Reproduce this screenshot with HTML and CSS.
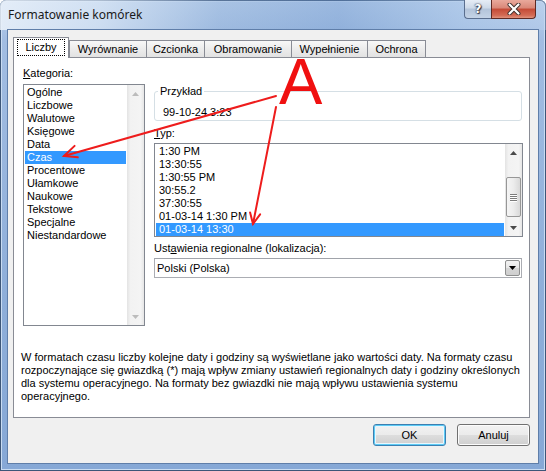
FILE: index.html
```html
<!DOCTYPE html>
<html lang="pl">
<head>
<meta charset="utf-8">
<title>Formatowanie komórek</title>
<link rel="stylesheet" href="styles.css">
</head>
<body>
<div class="window">
  <div class="titlebar">
    <span class="title">Formatowanie komórek</span>
    <div class="caption">
      <div class="cbtn help"><span>?</span></div>
      <div class="cbtn close">
        <svg width="14" height="12" viewBox="0 0 14 12"><path d="M2.5 1.5 L11.5 10.5 M11.5 1.5 L2.5 10.5" stroke="#40302c" stroke-width="4" stroke-linecap="round"/><path d="M2.5 1.5 L11.5 10.5 M11.5 1.5 L2.5 10.5" stroke="#ffffff" stroke-width="2.2" stroke-linecap="round"/></svg>
      </div>
    </div>
  </div>
  <div class="client">
    <div class="tabs">
      <div class="tab sel t1"><span class="focus">Liczby</span></div>
      <div class="tab t2">Wyrównanie</div>
      <div class="tab t3">Czcionka</div>
      <div class="tab t4">Obramowanie</div>
      <div class="tab t5">Wypełnienie</div>
      <div class="tab t6">Ochrona</div>
    </div>
    <div class="panel">
      <div class="main">
        <div class="leftcol">
          <div class="label"><u>K</u>ategoria:</div>
          <div class="listbox cat">
            <div class="items">
              <div class="item">Ogólne</div>
              <div class="item">Liczbowe</div>
              <div class="item">Walutowe</div>
              <div class="item">Księgowe</div>
              <div class="item">Data</div>
              <div class="item on">Czas</div>
              <div class="item">Procentowe</div>
              <div class="item">Ułamkowe</div>
              <div class="item">Naukowe</div>
              <div class="item">Tekstowe</div>
              <div class="item">Specjalne</div>
              <div class="item">Niestandardowe</div>
            </div>
            <div class="sb">
              <div class="arrow"><svg width="7" height="4" viewBox="0 0 7 4"><polygon points="0,4 7,4 3.5,0" fill="#bcbcbc"/></svg></div>
              <div class="track"></div>
              <div class="arrow"><svg width="7" height="4" viewBox="0 0 7 4"><polygon points="0,0 7,0 3.5,4" fill="#bcbcbc"/></svg></div>
            </div>
          </div>
        </div>
        <div class="rightcol">
          <fieldset class="group">
            <legend>Przykład</legend>
            <div class="sample">99-10-24 3:23</div>
          </fieldset>
          <div class="label lbl-typ"><u>T</u>yp:</div>
          <div class="listbox type">
            <div class="items">
              <div class="item">1:30 PM</div>
              <div class="item">13:30:55</div>
              <div class="item">1:30:55 PM</div>
              <div class="item">30:55.2</div>
              <div class="item">37:30:55</div>
              <div class="item">01-03-14 1:30 PM</div>
              <div class="item on">01-03-14 13:30</div>
            </div>
            <div class="sb">
              <div class="arrow"><svg width="7" height="4" viewBox="0 0 7 4"><polygon points="0,4 7,4 3.5,0" fill="#4a4a4a"/></svg></div>
              <div class="track">
                <div class="thumb"><span class="grip"></span><span class="grip"></span><span class="grip"></span><span class="grip"></span></div>
              </div>
              <div class="arrow"><svg width="7" height="4" viewBox="0 0 7 4"><polygon points="0,0 7,0 3.5,4" fill="#4a4a4a"/></svg></div>
            </div>
          </div>
          <div class="label lbl-ust">Ust<u>a</u>wienia regionalne (lokalizacja):</div>
          <div class="combo">
            <span class="combo-text">Polski (Polska)</span>
            <div class="dropbtn"><svg width="7" height="4" viewBox="0 0 7 4"><polygon points="0,0 7,0 3.5,4" fill="#000"/></svg></div>
          </div>
        </div>
      </div>
      <p class="desc">W formatach czasu liczby kolejne daty i godziny są wyświetlane jako wartości daty. Na formaty czasu<br>rozpoczynające się gwiazdką (*) mają wpływ zmiany ustawień regionalnych daty i godziny określonych<br>dla systemu operacyjnego. Na formaty bez gwiazdki nie mają wpływu ustawienia systemu<br>operacyjnego.</p>
    </div>
    <div class="buttons">
      <div class="btn default">OK</div>
      <div class="btn">Anuluj</div>
    </div>
  </div>
  <div class="bigA">A</div>
  <svg class="annot" width="546" height="471" viewBox="0 0 546 471">
    <g stroke="#ee1c1c" stroke-width="2" fill="none" stroke-linecap="round">
      <path d="M276 96 L64 156"/>
      <path d="M77.8 157.3 L64 156 L74.6 145.9"/>
      <path d="M276 107 L253 224"/>
      <path d="M260.1 214.3 L253 224 L250.1 212.4"/>
    </g>
  </svg>
</div>
</body>
</html>
```
FILE: styles.css
```css
html, body {
  margin: 0;
  padding: 0;
}
body {
  width: 546px;
  height: 471px;
  overflow: hidden;
  font-family: "Liberation Sans", Arial, sans-serif;
  font-size: 11px;
  color: #000;
}
.window {
  position: relative;
  width: 546px;
  height: 471px;
  box-sizing: border-box;
  display: flex;
  flex-direction: column;
  border-radius: 6px 6px 0 0;
  background: linear-gradient(180deg, #b9d0ec 0px, #a2bde2 40px, #8eaed9 300px, #86a8d6 471px);
  box-shadow: inset 0 0 0 1px #3d5678, inset 0 0 0 2px #c9dcf2;
}
.titlebar {
  height: 30px;
  flex: none;
  display: flex;
  justify-content: space-between;
  align-items: flex-start;
  padding: 0 10px 0 8px;
  border-radius: 6px 6px 0 0;
  background: linear-gradient(90deg, rgba(235,242,250,0.85) 0%, rgba(220,232,246,0.7) 18%, rgba(140,172,214,0.35) 40%, rgba(110,150,205,0.4) 62%, rgba(170,198,232,0.5) 85%, rgba(190,210,238,0.4) 100%);
}
.title {
  line-height: 30px;
  font-family: "Noto Sans", "Open Sans", sans-serif;
  font-size: 12px;
  color: #1a1a1a;
}
.caption {
  display: flex;
  height: 19px;
  margin-top: 0;
}
.cbtn {
  height: 19px;
  box-sizing: border-box;
  display: flex;
  align-items: center;
  justify-content: center;
}
.help {
  width: 27px;
  border: 1px solid #5a6e8e;
  border-top: none;
  border-right: none;
  border-radius: 0 0 0 4px;
  background: linear-gradient(180deg, #e6edf6 0%, #cdd9e8 45%, #b3c4da 50%, #c4d3e6 100%);
}
.help span {
  font-family: "DejaVu Sans", sans-serif;
  font-weight: bold;
  font-size: 12px;
  color: #fff;
  text-shadow: 0 0 1px #334, 0 0 2px #334, 1px 1px 1px #334;
}
.close {
  width: 45px;
  border: 1px solid #5e2a24;
  border-top: none;
  border-radius: 0 0 4px 0;
  background: linear-gradient(180deg, #e9a99c 0%, #d98777 45%, #c44a36 50%, #d36b55 85%, #e0937e 100%);
}
.client {
  flex: none;
  height: 433px;
  margin: 0 8px;
  box-sizing: border-box;
  background: #f0f0f0;
  box-shadow: 0 0 0 1px #5f7ea9;
  padding: 7px 8px 0 5px;
}
.tabs {
  display: flex;
  align-items: flex-end;
  height: 20px;
  position: relative;
  z-index: 2;
}
.tab {
  height: 17px;
  box-sizing: border-box;
  border: 1px solid #898c95;
  border-bottom: none;
  background: linear-gradient(180deg, #f8f8f8 0%, #ececec 50%, #e2e2e2 100%);
  display: flex;
  align-items: center;
  justify-content: center;
  margin-left: -1px;
  line-height: 13px;
}
.tab.sel {
  height: 21px;
  margin-bottom: -1px;
  margin-left: 0;
  background: #fff;
  position: relative;
  z-index: 3;
  padding-bottom: 2px;
}
.t1 { width: 56px; }
.t2 { width: 78px; margin-left: 0; }
.t3 { width: 59px; }
.t4 { width: 88px; }
.t5 { width: 77px; }
.t6 { width: 59px; }
.focus {
  outline: 1px dotted #000;
  padding: 1px 7px;
}
.panel {
  height: 361px;
  box-sizing: border-box;
  border: 1px solid #898c95;
  background: #fff;
  padding: 9px 6px 0 9px;
  position: relative;
  z-index: 1;
}
.main {
  display: flex;
  gap: 9px;
}
.leftcol {
  width: 122px;
  flex: none;
}
.rightcol {
  flex: 1;
}
.label {
  height: 13px;
  line-height: 13px;
  white-space: nowrap;
}
.listbox {
  border: 1px solid #828790;
  box-sizing: border-box;
  display: flex;
  background: #fff;
}
.cat {
  margin-top: 4px;
  height: 242px;
}
.items {
  flex: 1;
  padding: 1px 1px 0 1px;
}
.item {
  height: 13px;
  line-height: 13px;
  padding-left: 2px;
  white-space: nowrap;
}
.type .item {
  padding-left: 3px;
}
.item.on {
  background: #3399ff;
  color: #fff;
}
.sb {
  width: 17px;
  flex: none;
  display: flex;
  flex-direction: column;
  background: linear-gradient(90deg, #e3e3e3 0%, #f2f2f2 20%, #f4f4f4 80%, #e6e6e6 100%);
}
.arrow {
  height: 17px;
  flex: none;
  display: flex;
  align-items: center;
  justify-content: center;
}
.track {
  flex: 1;
}
.type .track {
  padding: 16px 1px 0 1px;
}
.thumb {
  height: 40px;
  box-sizing: border-box;
  border: 1px solid #979797;
  border-radius: 2px;
  background: linear-gradient(90deg, #f5f5f5 0%, #ececec 50%, #d9d9d9 100%);
  display: flex;
  flex-direction: column;
  align-items: center;
  justify-content: center;
  gap: 1px;
}
.grip {
  width: 7px;
  height: 1px;
  background: #7c7c7c;
  box-shadow: 0 1px 0 #fff;
}
.group {
  margin: 18px 1px 0 0;
  padding: 0 3px 1px 3px;
  border: 1px solid #d5dfe5;
  border-radius: 3px;
  min-width: 0;
}
.group legend {
  padding: 0 2px;
  line-height: 13px;
}
.sample {
  margin-top: 8px;
  padding-left: 5px;
  line-height: 13px;
}
.lbl-typ {
  margin-top: 6px;
}
.type {
  margin-top: 3px;
  height: 94px;
}
.lbl-ust {
  margin-top: 5px;
}
.combo {
  margin-top: 3px;
  margin-right: 1px;
  height: 20px;
  box-sizing: border-box;
  border: 1px solid #abadb3;
  border-top-color: #a0a3aa;
  display: flex;
  align-items: center;
  justify-content: space-between;
  background: #fff;
}
.combo-text {
  padding-left: 2px;
}
.dropbtn {
  width: 15px;
  height: 16px;
  margin-right: 1px;
  box-sizing: border-box;
  border: 1px solid #8e8f8f;
  border-radius: 2px;
  background: linear-gradient(180deg, #f3f3f3 0%, #e7e7e7 50%, #d5d5d5 51%, #cfcfcf 100%);
  display: flex;
  align-items: center;
  justify-content: center;
}
.desc {
  margin: 25px 0 0 -2px;
  line-height: 13px;
  white-space: nowrap;
}
.buttons {
  display: flex;
  justify-content: flex-end;
  gap: 11px;
  margin-top: 6px;
}
.btn {
  width: 73px;
  height: 22px;
  box-sizing: border-box;
  border: 1px solid #707070;
  border-radius: 3px;
  background: linear-gradient(180deg, #f2f2f2 0%, #ebebeb 50%, #dddddd 51%, #cfcfcf 100%);
  box-shadow: inset 0 0 0 1px #fcfcfc;
  display: flex;
  align-items: center;
  justify-content: center;
}
.btn.default {
  border-color: #3c7fb1;
  box-shadow: inset 0 0 0 1px #5ccbf5, inset 0 0 0 2px #e8f6fd;
}
.annot {
  position: absolute;
  left: 0;
  top: 0;
  pointer-events: none;
  z-index: 10;
}
.bigA {
  position: absolute;
  left: 279px;
  top: 58px;
  height: 48px;
  line-height: 48px;
  font-family: "Liberation Sans", Arial, sans-serif;
  font-size: 65px;
  color: #f01010;
  z-index: 10;
  pointer-events: none;
}
```
